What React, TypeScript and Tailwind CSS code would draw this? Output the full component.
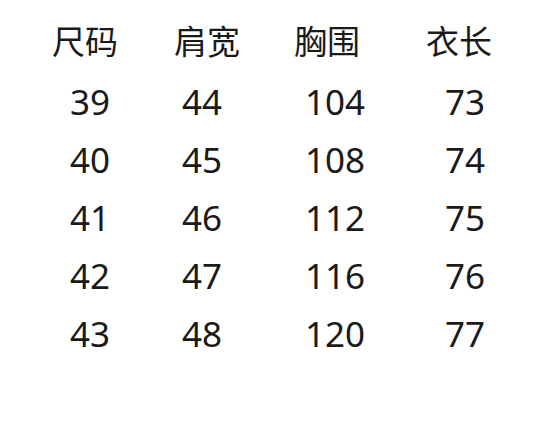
const headers = ['尺码', '肩宽', '胸围', '衣长']

const rows = [
  ['39', '44', '104', '73'],
  ['40', '45', '108', '74'],
  ['41', '46', '112', '75'],
  ['42', '47', '116', '76'],
  ['43', '48', '120', '77'],
]

// per-column left padding for the numbers, relative to header start
const numPad = ['pl-[18px]', 'pl-[8px]', 'pl-[11px]', 'pl-[19px]']

export default function App() {
  return (
    <div className="w-[536px] h-[448px] bg-white text-[#1a1a1a] pt-[14px] pl-[52px]">
      <div className="grid grid-cols-[122px_120px_132px_1fr]">
        {headers.map((h) => (
          <div
            key={h}
            className="h-[58px] pb-[6px] flex items-center text-[33px] leading-none"
            style={{ fontFamily: '"Noto Sans CJK SC", "Noto Sans", sans-serif' }}
          >
            {h}
          </div>
        ))}
        {rows.map((r) =>
          r.map((v, i) => (
            <div
              key={r[0] + '-' + i}
              className={`h-[58px] flex items-center text-[35px] leading-none ${numPad[i]}`}
              style={{ fontFamily: '"Noto Sans", sans-serif' }}
            >
              {v}
            </div>
          ))
        )}
      </div>
    </div>
  )
}
